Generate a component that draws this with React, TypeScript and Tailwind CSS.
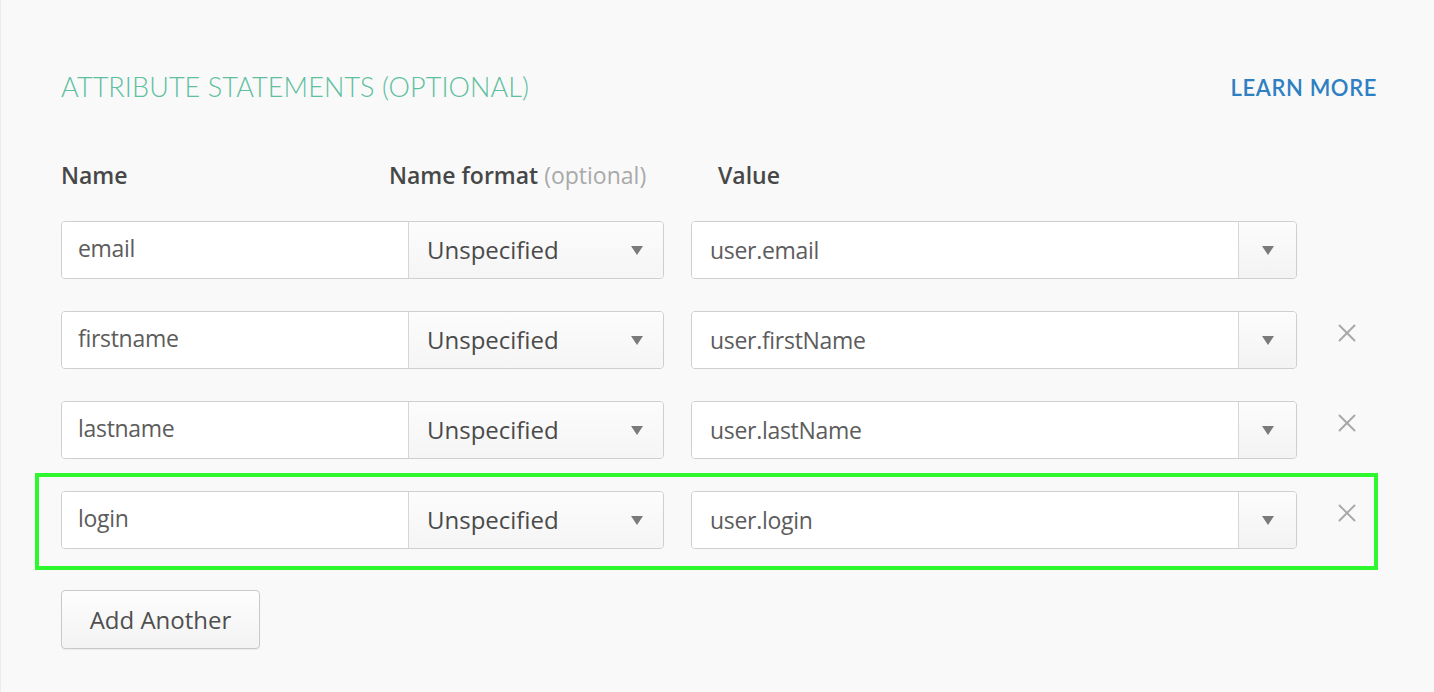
import { X } from 'lucide-react'

interface Attribute {
  name: string
  value: string
  removable: boolean
  highlighted?: boolean
}

const attributes: Attribute[] = [
  { name: 'email', value: 'user.email', removable: false },
  { name: 'firstname', value: 'user.firstName', removable: true },
  { name: 'lastname', value: 'user.lastName', removable: true },
  { name: 'login', value: 'user.login', removable: true, highlighted: true },
]

const bodyFont = { fontFamily: '"Open Sans", Lato, sans-serif' }

function Caret() {
  return (
    <svg width="12" height="9" viewBox="0 0 12 9" className="shrink-0">
      <path d="M0 0 H12 L6 9 Z" fill="#7a7a7a" />
    </svg>
  )
}

function AttributeRow({ attr }: { attr: Attribute }) {
  return (
    <div className="relative flex h-[58px] items-stretch" style={bodyFont}>
      {attr.highlighted && (
        <div className="pointer-events-none absolute -top-[18px] -left-[26px] h-[97px] w-[1343px] border-4 border-[#2ef72e]" />
      )}
      <div className="flex w-[603px] overflow-hidden rounded-[4px] border border-[#cfcfcf]">
        <div className="flex w-[346px] items-center bg-white pl-4 pb-1 text-[23px] tracking-[-0.3px] text-[#5c5c5c]">
          {attr.name}
        </div>
        <div className="flex flex-1 items-center justify-between border-l border-[#d6d6d6] bg-gradient-to-b from-[#fcfcfc] to-[#f5f5f5] pl-[18px] pr-5 text-[24px] text-[#4a4a4a]">
          <span>Unspecified</span>
          <Caret />
        </div>
      </div>
      <div className="ml-[27px] flex w-[606px] overflow-hidden rounded-[4px] border border-[#cfcfcf]">
        <div className="flex flex-1 items-center bg-white pl-[18px] text-[23px] tracking-[-0.3px] text-[#5c5c5c]">
          {attr.value}
        </div>
        <div className="flex w-[58px] items-center justify-center border-l border-[#d6d6d6] bg-gradient-to-b from-[#fcfcfc] to-[#f3f3f3]">
          <Caret />
        </div>
      </div>
      {attr.removable && (
        <div className="ml-[35px] flex items-center pb-[14px]">
          <X className="h-[30px] w-[30px] text-[#a8a8a8]" strokeWidth={1.5} />
        </div>
      )}
    </div>
  )
}

export default function App() {
  return (
    <div
      className="h-[692px] w-full overflow-hidden border-l border-[#ececec] bg-[#f9f9f9] pt-[67px] pl-[60px] pr-[57px]"
      style={{ fontFamily: 'Lato, "Open Sans", sans-serif' }}
    >
      <div className="flex items-center justify-between">
        <h2 className="text-[27px] font-light tracking-[0.1px] text-[#5fbf9f]">
          ATTRIBUTE STATEMENTS (OPTIONAL)
        </h2>
        <a className="text-[22px] font-semibold tracking-[0.6px] text-[#2f80c2]">LEARN MORE</a>
      </div>

      <div className="mt-[50px] flex text-[23px] font-semibold text-[#474747]" style={bodyFont}>
        <div className="w-[328px]">Name</div>
        <div className="w-[329px]">
          Name format <span className="font-normal text-[#a9a9a9]">(optional)</span>
        </div>
        <div>Value</div>
      </div>

      <div className="mt-[29px] flex flex-col gap-[32px]">
        {attributes.map((attr) => (
          <AttributeRow key={attr.name} attr={attr} />
        ))}
      </div>

      <button
        className="mt-[41px] h-[59px] w-[199px] rounded-[4px] border border-[#c9c9c9] bg-gradient-to-b from-[#fdfdfd] to-[#f3f3f3] text-[24px] text-[#4f4f4f] shadow-[0_1px_1px_rgba(0,0,0,0.06)]"
        style={bodyFont}
      >
        Add Another
      </button>
    </div>
  )
}
